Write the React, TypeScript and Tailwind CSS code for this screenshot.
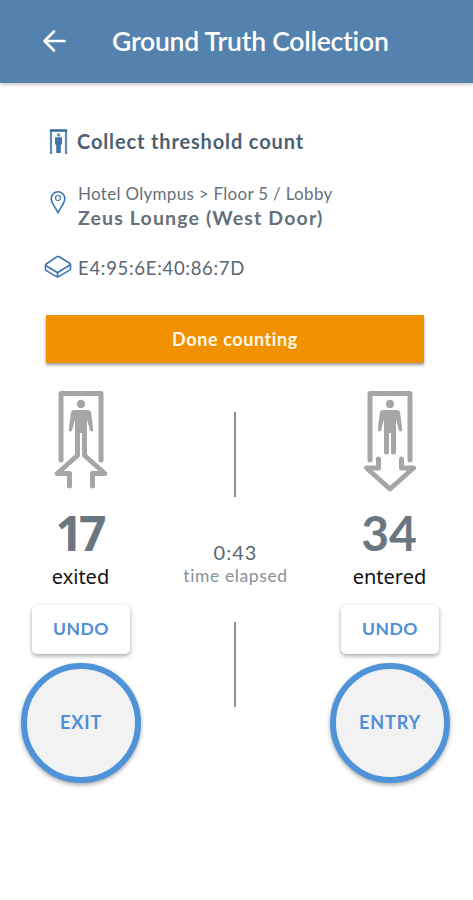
import type { ReactNode } from "react";

function DoorPerson() {
  return (
    <>
      <circle cx="27" cy="14" r="4.200" fill="#a6a6a6" />
      <path
        d="M20.500 20h13c2.200 0 3.300 1.200 3.700 3.200l2 16c.2 2.600-2.800 3-3.400.8L33 29.500V62.500c0 2.800-5 2.800-5 0V43h-2v19.500c0 2.800-5 2.800-5 0V29.500L18.200 40c-.6 2.200-3.600 1.800-3.400-.8l2-16c.4-2 1.500-3.200 3.700-3.200Z"
        fill="#a6a6a6"
      />
    </>
  );
}

function ExitIcon() {
  return (
    <svg width="54" height="100" viewBox="0 0 54 100" fill="none">
      <path d="M7 70V3.500h40V70" stroke="#a6a6a6" strokeWidth="5" strokeLinecap="round" strokeLinejoin="round" />
      <DoorPerson />
      <path
        d="M15.500 96V83.500H3.200L23.500 65.500V58M38.500 96V83.500H50.800L30.500 65.500V58"
        stroke="#a6a6a6"
        strokeWidth="5"
        strokeLinecap="round"
        strokeLinejoin="round"
      />
    </svg>
  );
}

function EntryIcon() {
  return (
    <svg width="54" height="103" viewBox="0 0 54 103" fill="none">
      <path d="M7 70V3.500h40V70" stroke="#a6a6a6" strokeWidth="5" strokeLinecap="round" strokeLinejoin="round" />
      <DoorPerson />
      <path
        d="M15.500 69v9H3.500l23.500 21L50.500 78H38.500v-9"
        stroke="#a6a6a6"
        strokeWidth="5"
        strokeLinecap="round"
        strokeLinejoin="round"
      />
    </svg>
  );
}

type CounterProps = {
  icon: ReactNode;
  count: ReactNode;
  label: string;
  action: string;
};

function Counter({ icon, count, label, action }: CounterProps) {
  return (
    <div className="flex flex-col items-center">
      <div className="h-[117px]">{icon}</div>
      <span className="h-[54px] text-[48px] leading-[52px] font-bold text-[#6b7780]">{count}</span>
      <span className="mt-[2px] mr-[1px] font-['Noto_Sans'] text-[20px] leading-[28px] text-[#111]">{label}</span>
      <button className="mt-[14px] h-[49px] w-[98px] rounded-[5px] bg-white text-[17.500px] font-bold tracking-[0.500px] text-[#4f8fd6] shadow-[0_2px_4px_rgba(0,0,0,0.35)]">
        UNDO
      </button>
      <button className="mt-[9px] size-[120px] rounded-full border-[6px] border-[#4f93d8] bg-[#f2f2f2] pb-[2px] text-[18px] font-bold tracking-[0.900px] text-[#4f8fd6] shadow-[0_2px_4px_rgba(0,0,0,0.35)]">
        {action}
      </button>
    </div>
  );
}

export default function App() {
  return (
    <div className="h-[900px] w-full overflow-hidden bg-white font-['Lato',sans-serif]">
      <header className="flex h-[83px] items-center bg-[#5382ae] pl-[42px] shadow-[0_2px_3px_rgba(80,50,40,0.25)]">
        <svg width="25" height="24" viewBox="0 0 25 24" fill="none" className="mt-[-1px]">
          <path
            d="M22.500 12H3M12 2.500 2.500 12l9.500 9.500"
            stroke="white"
            strokeWidth="2.700"
            strokeLinecap="round"
            strokeLinejoin="round"
          />
        </svg>
        <h1 className="ml-[45px] pb-[1px] text-[26.500px] leading-[32px] font-semibold tracking-[-0.200px] whitespace-nowrap text-white">
          Ground Truth Collection
        </h1>
      </header>

      <section className="flex flex-col pt-[43px] pl-[44px] whitespace-nowrap">
        <div className="flex h-[29px] items-center">
          <svg width="33" height="28" viewBox="0 0 33 28" fill="none">
            <path d="M7 27V3.500h15V27" stroke="#5b8cba" strokeWidth="2.200" />
            <path d="M5.900 3.500h17.200" stroke="#2f6ca4" strokeWidth="2.200" />
            <circle cx="14.500" cy="8" r="1.800" fill="#6f91b0" />
            <path d="M11 10.200h7v7.300h-1.200V26h-4.600v-8.500H11z" fill="#3e74a8" />
          </svg>
          <h2 className="text-[20px] leading-[28px] font-bold tracking-[0.860px] text-[#4d5f72]">
            Collect threshold count
          </h2>
        </div>

        <div className="mt-[24px] flex h-[52px]">
          <svg width="34" height="36" viewBox="0 0 34 36" fill="none" className="mt-[5px]">
            <path
              d="M14 28.500C10.500 22 7.200 19 7.200 14.500a6.800 6.800 0 0 1 13.600 0C20.800 19 17.500 22 14 28.500Z"
              stroke="#3a74b0"
              strokeWidth="1.600"
            />
            <circle cx="14" cy="14" r="2.500" stroke="#3a74b0" strokeWidth="1.100" />
          </svg>
          <div className="flex flex-col pt-[3px] text-[#66707a]">
            <span className="text-[17px] leading-[24px] tracking-[0.300px]">Hotel Olympus &gt; Floor 5 / Lobby</span>
            <span className="text-[19.500px] leading-[24px] font-bold tracking-[1.140px]">Zeus Lounge (West Door)</span>
          </div>
        </div>

        <div className="mt-[22px] flex h-[28px] items-center">
          <svg width="34" height="28" viewBox="0 0 34 28" fill="none">
            <path
              d="M2.200 11 12.800 3.800q1.200-.7 2.400 0L25.800 10.300q1.200.8 0 1.700L15 18.800q-1.500.9-3 0L2.200 12.800q-1.400-.9 0-1.800ZM1.500 12v4.300q0 .8.800 1.300l9.700 5.800q1.500.9 3 0l10.700-6.300q.8-.5.800-1.300v-4.500M13.500 19.500v4.300"
              stroke="#3a74b0"
              strokeWidth="1.600"
              strokeLinejoin="round"
            />
          </svg>
          <span className="pt-[1px] text-[18.500px] leading-[28px] tracking-[0.700px] text-[#596673]">
            E4:95:6E:40:86:7D
          </span>
        </div>
      </section>

      <button className="mt-[34px] ml-[46px] block h-[48px] w-[378px] bg-[#f29100] text-[18px] font-bold tracking-[0.600px] text-[#fff8ea] shadow-[0_2px_3px_rgba(0,0,0,0.4)]">
        Done counting
      </button>

      <main className="mt-[27px] grid grid-cols-[120px_1fr_120px] pr-[23px] pl-[21px]">
        <Counter
          icon={<ExitIcon />}
          count={<span className="-ml-[4px] font-['Noto_Sans'] tracking-[-4px]">17</span>}
          label="exited"
          action="EXIT"
        />

        <div className="flex flex-col items-center pt-[22px]">
          <div className="mr-[1px] h-[85px] w-[1.500px] bg-[#8f8f8f]" />
          <span className="mt-[42px] text-[20px] leading-[26px] tracking-[1px] text-[#5b6670]">0:43</span>
          <span className="text-[17.500px] leading-[22px] tracking-[0.600px] text-[#87919a]">time elapsed</span>
          <div className="mt-[35px] mr-[1px] h-[85px] w-[1.500px] bg-[#8f8f8f]" />
        </div>

        <Counter icon={<EntryIcon />} count={<span className="-ml-[2px]">34</span>} label="entered" action="ENTRY" />
      </main>
    </div>
  );
}
